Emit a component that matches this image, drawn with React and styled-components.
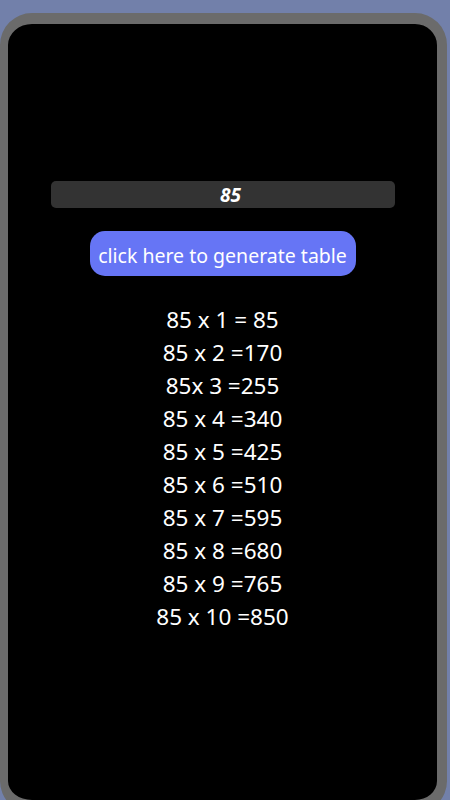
import React, { useState } from 'react';
import styled, { createGlobalStyle } from 'styled-components';

const GlobalStyle = createGlobalStyle`
  html, body {
    margin: 0;
    padding: 0;
    background: #7280aa;
    font-family: "Noto Sans", "Open Sans", sans-serif;
  }
`;

const Page = styled.div`
  width: 450px;
  height: 800px;
  padding-top: 13px;
  box-sizing: border-box;
  overflow: hidden;
`;

const Phone = styled.div`
  width: 447px;
  height: 800px;
  box-sizing: border-box;
  background: #000;
  border: solid #6b6b6b;
  border-width: 11px 10px 13px 8px;
  border-radius: 32px;
  display: flex;
  flex-direction: column;
  align-items: center;
  padding-top: 157px;
`;

const NumberInput = styled.input`
  width: 344px;
  height: 27px;
  box-sizing: border-box;
  background: #333;
  border: none;
  border-radius: 5px;
  color: #fff;
  font-family: inherit;
  font-size: 19px;
  font-weight: 700;
  font-style: italic;
  text-align: center;
  outline: none;
  padding: 0 0 0 16px;
`;

const GenerateButton = styled.button`
  margin-top: 23px;
  height: 45px;
  width: 266px;
  padding: 4px 0 0;
  background: #6675f5;
  border: none;
  border-radius: 15px;
  color: #fff;
  font-family: inherit;
  font-size: 19.5px;
  cursor: pointer;
`;

const Table = styled.div`
  margin-top: 27px;
  display: flex;
  flex-direction: column;
  align-items: center;
`;

const Row = styled.div`
  color: #fff;
  font-size: 22.5px;
  line-height: 33px;
  white-space: pre;
`;

const rows = [
  '85 x 1 = 85',
  '85 x 2 =170',
  '85x 3 =255',
  '85 x 4 =340',
  '85 x 5 =425',
  '85 x 6 =510',
  '85 x 7 =595',
  '85 x 8 =680',
  '85 x 9 =765',
  '85 x 10 =850',
];

const App = () => {
  const [value, setValue] = useState('85');

  return (
    <Page>
      <GlobalStyle />
      <Phone>
        <NumberInput value={value} onChange={(e) => setValue(e.target.value)} />
        <GenerateButton>click here to generate table</GenerateButton>
        <Table>
          {rows.map((r) => (
            <Row key={r}>{r}</Row>
          ))}
        </Table>
      </Phone>
    </Page>
  );
};

export default App;
